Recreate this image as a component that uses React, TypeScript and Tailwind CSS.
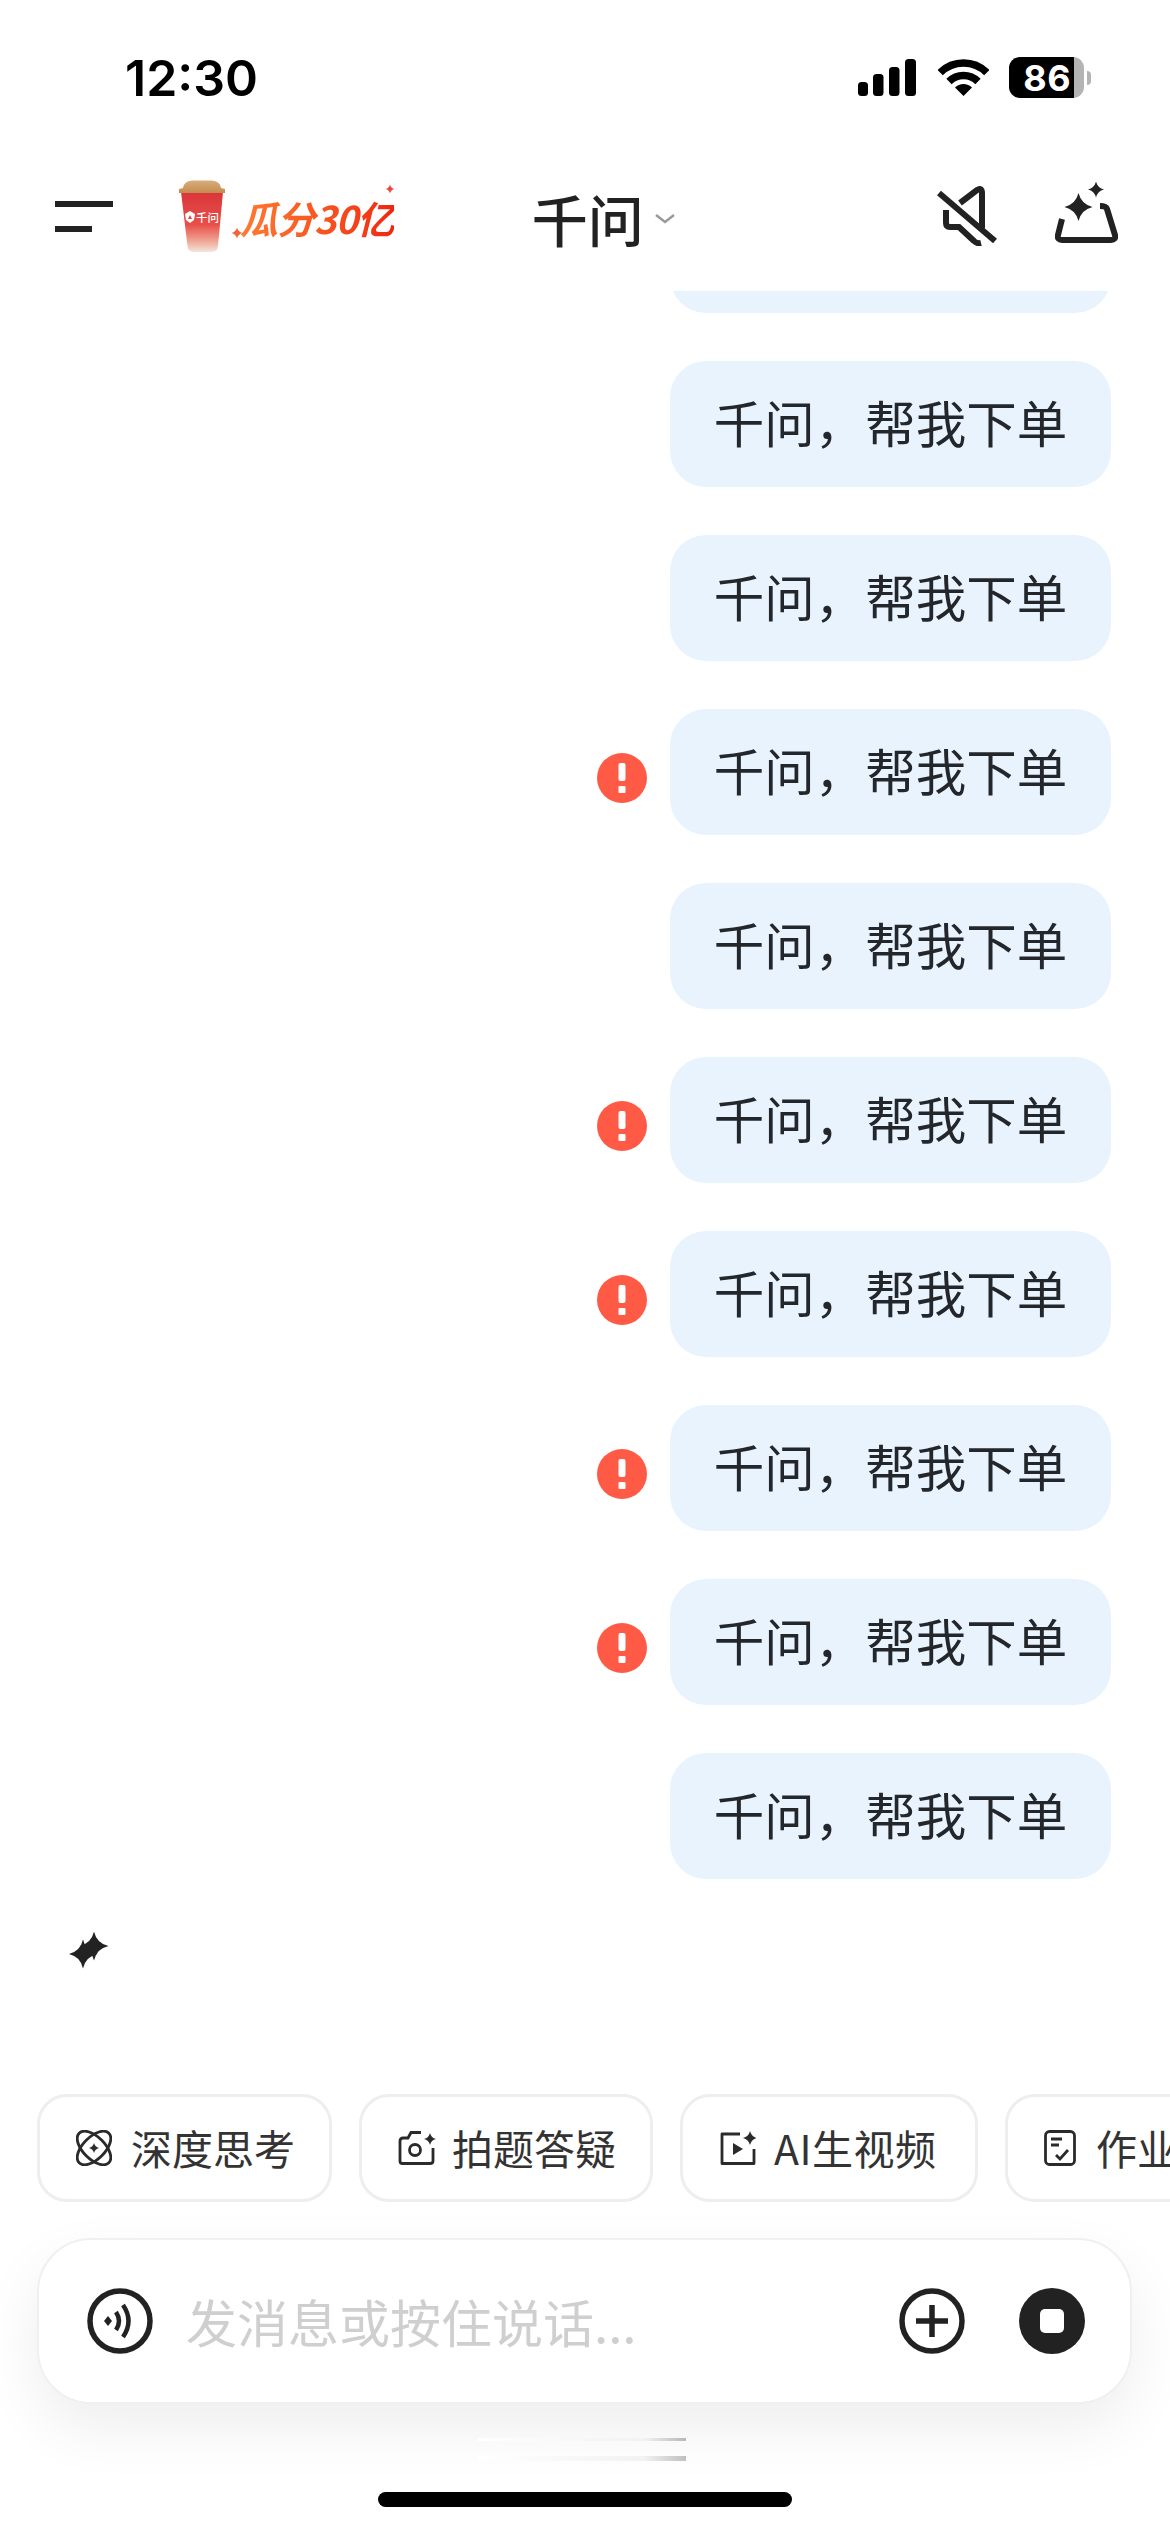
import React from 'react';

const cjk = "font-['Noto_Sans_CJK_SC','Noto_Sans',sans-serif]";

// four point star path
const star = (cx: number, cy: number, r: number, k = 0.2) => {
  const c = r * k;
  return `M${cx} ${cy - r}Q${cx + c} ${cy - c} ${cx + r} ${cy}Q${cx + c} ${cy + c} ${cx} ${cy + r}Q${cx - c} ${cy + c} ${cx - r} ${cy}Q${cx - c} ${cy - c} ${cx} ${cy - r}Z`;
};

const SignalIcon = () => (
  <svg width="58" height="37" viewBox="0 0 58 37">
    <rect x="0" y="23" width="10" height="14" rx="3.5" fill="#000" />
    <rect x="15" y="15" width="10.5" height="22" rx="3.5" fill="#000" />
    <rect x="31" y="8" width="10.5" height="29" rx="3.5" fill="#000" />
    <rect x="47" y="0" width="11" height="37" rx="3.5" fill="#000" />
  </svg>
);

const WifiIcon = () => (
  <svg width="51" height="37" viewBox="936 59 51 37">
    <path d="M938.2 72.7A33 33 0 0 1 984.8 72.7" fill="none" stroke="#000" strokeWidth="7.5" />
    <path d="M947 81.5A20.5 20.5 0 0 1 976 81.5" fill="none" stroke="#000" strokeWidth="7.5" />
    <path d="M961.5 96L953 87.5A12 12 0 0 1 970 87.5Z" fill="#000" />
  </svg>
);

const Battery = () => (
  <div className="flex items-center">
    <div className="flex h-[41px] w-[75px] overflow-hidden rounded-[11px]">
      <div className="flex w-[65px] items-center justify-end bg-black pr-[3px] font-['Inter',sans-serif] text-[36px] font-bold tracking-[0.5px] text-white">
        86
      </div>
      <div className="flex-1 bg-[#b4b4b4]" />
    </div>
    <div className="ml-[3px] h-[14px] w-[4px] rounded-r-full bg-[#b4b4b4]" />
  </div>
);

const MuteIcon = () => (
  <svg width="60" height="60" viewBox="936 186 60 60" fill="none" stroke="#222" strokeWidth="6">
    <path d="M959 203L976 190Q981 187 981 193V228" />
    <path d="M945 210V223Q945 227 949 227H958L973 241Q976 244 980 243" />
    <path d="M938 193L994 241" />
  </svg>
);

const MagicIcon = () => (
  <svg width="63" height="61" viewBox="1055 182 63 61">
    <path d={star(1078.5, 207, 14)} fill="#222" />
    <path d={star(1096, 189.5, 8)} fill="#222" />
    <path
      d="M1062 219L1058 235Q1057 240 1062 240H1111Q1116 240 1115 235L1107 209Q1106 206 1100 206"
      fill="none"
      stroke="#222"
      strokeWidth="6"
    />
  </svg>
);

const Logo = () => (
  <div className="flex items-start">
    <svg width="46" height="72" viewBox="179 180 46 72">
      <defs>
        <linearGradient id="cupBody" x1="0" y1="0" x2="0" y2="1">
          <stop offset="0" stopColor="#d9363a" />
          <stop offset="0.55" stopColor="#e9504a" />
          <stop offset="0.82" stopColor="#f0a795" />
          <stop offset="1" stopColor="#f3e6de" />
        </linearGradient>
        <linearGradient id="cupLid" x1="0" y1="0" x2="0" y2="1">
          <stop offset="0" stopColor="#d8ae7c" />
          <stop offset="1" stopColor="#c48c4e" />
        </linearGradient>
      </defs>
      <path d="M181 192H223L218 246Q218 252 210 252H194Q188 252 187.500 246Z" fill="url(#cupBody)" />
      <path d="M183 188Q184 181 192 180.500H212Q220 181 221 188L225 189V193H179V189Z" fill="url(#cupLid)" />
      <path d="M190 211L195 214L194 220L190 223L186 220L185 214Z" fill="#fff" />
      <path d="M190 215L192 219H188Z" fill="#e2463f" />
      <text x="196" y="222" fontSize="11.500" fontWeight="500" fill="#fff" fontFamily="'Noto Sans CJK SC', sans-serif">
        千问
      </text>
    </svg>
    <div className="relative ml-[15px] mt-[13px] bg-gradient-to-r from-[#ff7a32] to-[#f0250f] bg-clip-text font-['Noto_Sans_CJK_SC',sans-serif] text-[38px] leading-[50px] font-bold italic tracking-[-1px] text-transparent">
      瓜分30亿
      <svg className="absolute left-[-9px] top-[34px]" width="12" height="12" viewBox="0 0 12 12">
        <path d={star(6, 6, 5.5)} fill="#f4633a" />
      </svg>
      <svg className="absolute left-[145px] top-[-9px]" width="10" height="10" viewBox="0 0 10 10">
        <path d={star(5, 5, 4.5)} fill="#f0453a" />
      </svg>
    </div>
  </div>
);

const AlertIcon = () => (
  <div className="mr-[23px] mt-[12px] flex h-[50px] w-[50px] items-center justify-center rounded-full bg-[#ff5a45]">
    <svg width="10" height="30" viewBox="0 0 10 30">
      <rect x="1.5" y="0" width="7" height="18" rx="2" fill="#fff" />
      <rect x="1.5" y="23" width="7" height="7" rx="1" fill="#fff" />
    </svg>
  </div>
);

const Bubble: React.FC<{ alert?: boolean; text?: string; className?: string }> = ({
  alert,
  text = '千问，帮我下单',
  className,
}) => (
  <div className={`flex items-center justify-end ${className ?? ''}`}>
    {alert && <AlertIcon />}
    <div className={`flex h-[126px] w-[441px] items-center justify-center rounded-[36px] bg-[#e9f3fe] pb-[4px] text-[50.500px] text-[#23272b] ${cjk}`}>
      {text}
    </div>
  </div>
);

const OrbitIcon = () => (
  <svg width="36" height="36" viewBox="0 0 36 36" fill="none" stroke="#2a2a2a" strokeWidth="2.8">
    <ellipse cx="18" cy="18" rx="21" ry="11" transform="rotate(45 18 18)" />
    <ellipse cx="18" cy="18" rx="21" ry="11" transform="rotate(-45 18 18)" />
    <path d={star(18, 18, 5, 0.2)} fill="#2a2a2a" stroke="none" />
  </svg>
);

const CameraIcon = () => (
  <svg width="38" height="36" viewBox="0 0 38 36" fill="none" stroke="#2a2a2a" strokeWidth="2.8">
    <path d="M23 2.500H13L10 8H5Q2 8 2 11V31Q2 33.500 4.500 33.500H32Q35 33.500 35 31V18" />
    <circle cx="17" cy="20" r="5.500" />
    <path d={star(32, 9, 6)} fill="#2a2a2a" stroke="none" />
  </svg>
);

const VideoIcon = () => (
  <svg width="37" height="36" viewBox="0 0 37 36" fill="none" stroke="#2a2a2a" strokeWidth="2.8">
    <path d="M21 4H3V33.500H35V19" strokeLinejoin="round" />
    <path d="M14 13L24 19L14 25Z" fill="#2a2a2a" stroke="none" />
    <path d={star(31, 8, 7)} fill="#2a2a2a" stroke="none" />
  </svg>
);

const DocIcon = () => (
  <svg width="32" height="36" viewBox="0 0 32 36" fill="none" stroke="#2a2a2a" strokeWidth="2.8">
    <rect x="1.500" y="1.500" width="29" height="33" rx="4" />
    <path d="M7 9H18M7 15H15M12 25L16 29L24 20" />
  </svg>
);

const chips = [
  { icon: <OrbitIcon />, label: '深度思考', className: 'w-[295px] gap-[19px]' },
  { icon: <CameraIcon />, label: '拍题答疑', className: 'w-[294px] gap-[16px]' },
  { icon: <VideoIcon />, label: 'AI生视频', className: 'w-[298px] gap-[18px] tracking-[0.5px]' },
  { icon: <DocIcon />, label: '作业批改', className: 'w-[295px] gap-[20px]' },
];

const VoiceIcon = () => (
  <svg width="66" height="66" viewBox="0 0 66 66" fill="none" stroke="#222" strokeWidth="5.500">
    <circle cx="33" cy="33" r="30" />
    <path d="M21 28L25 33L21 38L17 33Z" fill="#222" stroke="none" />
    <path d="M29 24Q35 33 29 42" strokeWidth="4.500" />
    <path d="M36 17Q47 33 36 49" strokeWidth="4.500" />
  </svg>
);

const PlusIcon = () => (
  <svg width="66" height="66" viewBox="0 0 66 66" fill="none" stroke="#222" strokeWidth="5.500">
    <circle cx="33" cy="33" r="30" />
    <path d="M33 17V49M17 33H49" />
  </svg>
);

const StopIcon = () => (
  <svg width="66" height="66" viewBox="0 0 66 66">
    <circle cx="33" cy="33" r="33" fill="#222" />
    <rect x="21" y="21" width="24" height="24" rx="5" fill="#fff" />
  </svg>
);

export default function App() {
  return (
    <div className="flex h-[2532px] w-[1170px] flex-col overflow-hidden bg-white">
      {/* status bar */}
      <div className="flex h-[155px] shrink-0 items-start pt-[56px]">
        <div className="ml-[125px] font-['Inter',sans-serif] text-[50px] leading-[44px] font-semibold text-black">
          12:30
        </div>
        <div className="ml-[600px] flex items-center pt-[1px]">
          <SignalIcon />
          <div className="ml-[22px]">
            <WifiIcon />
          </div>
          <div className="ml-[20px]">
            <Battery />
          </div>
        </div>
      </div>

      {/* header */}
      <div className="flex h-[136px] shrink-0 items-start">
        <div className="ml-[55px] mt-[46px] flex w-[58px] flex-col gap-[19px]">
          <div className="h-[6px] w-[58px] bg-[#222]" />
          <div className="h-[6px] w-[37px] bg-[#222]" />
        </div>
        <div className="ml-[66px] mt-[25px]">
          <Logo />
        </div>
        <div className={`ml-[138px] mt-[28px] text-[56px] leading-[70px] font-medium text-[#222] ${cjk}`}>千问</div>
        <svg className="ml-[11px] mt-[59px]" width="20" height="10" viewBox="0 0 20 10" fill="none" stroke="#999" strokeWidth="2.500">
          <path d="M1 1L10 8L19 1" />
        </svg>
        <div className="ml-[262px] mt-[31px]">
          <MuteIcon />
        </div>
        <div className="ml-[58px] mt-[27px]">
          <MagicIcon />
        </div>
      </div>

      {/* chat */}
      <div className="min-h-0 flex-1 overflow-hidden pr-[59px]">
        <div className="flex flex-col gap-[48px]">
          <Bubble className="mt-[-104px]" text="" />
          <Bubble />
          <Bubble />
          <Bubble alert />
          <Bubble />
          <Bubble alert />
          <Bubble alert />
          <Bubble alert />
          <Bubble alert />
          <Bubble />
        </div>
        <svg className="ml-[69px] mt-[53px]" width="40" height="37" viewBox="69 1933 40 37">
          <path d={star(94, 1947, 14.5, 0.18)} fill="#222" />
          <path d={star(83, 1955, 14.5, 0.18)} fill="#222" />
        </svg>
      </div>

      {/* quick actions */}
      <div className="flex shrink-0 gap-[27px] overflow-hidden pl-[37px]">
        {chips.map((chip) => (
          <div
            key={chip.label}
            className={`flex h-[108px] shrink-0 items-center rounded-[30px] border-[3px] border-[#eeeeee] bg-white pl-[36px] ${chip.className}`}
          >
            {chip.icon}
            <span className={`text-[41px] whitespace-nowrap text-[#333] ${cjk}`}>{chip.label}</span>
          </div>
        ))}
      </div>

      {/* input */}
      <div className="ml-[37px] mr-[38px] mt-[36px] flex h-[166px] shrink-0 items-center rounded-[54px] border-[2px] border-[#f0f0f0] bg-white pl-[48px] pr-[45px] shadow-[0_24px_60px_rgba(0,0,0,0.07)]">
        <VoiceIcon />
        <div className={`ml-[33px] flex-1 text-[51px] text-[#cfcfcf] ${cjk}`}>发消息或按住说话...</div>
        <PlusIcon />
        <div className="ml-[54px]">
          <StopIcon />
        </div>
      </div>

      {/* leftover scroll marks and home bar */}
      <div className="ml-[478px] mt-[34px] flex flex-col gap-[15px]">
        <div className="h-[3px] w-[208px] bg-gradient-to-r from-white via-[#f2f2f2] via-80% to-[#b8b8b8]" />
        <div className="h-[5px] w-[208px] bg-gradient-to-r from-white via-[#f2f2f2] via-80% to-[#c0c0c0]" />
      </div>
      <div className="mb-[25px] ml-[378px] mt-[31px] h-[15px] w-[414px] shrink-0 rounded-full bg-black" />
    </div>
  );
}
